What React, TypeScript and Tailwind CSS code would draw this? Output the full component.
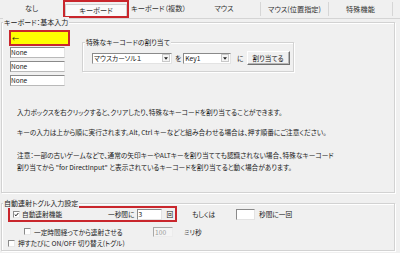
import React from "react";

function Check({ checked }: { checked?: boolean }) {
  return (
    <div className="relative w-[7px] h-[7px] bg-white border border-t-[#8a8a8a] border-l-[#8a8a8a] border-r-[#e8e8e8] border-b-[#e8e8e8] shrink-0">
      {checked && (
        <svg viewBox="0 0 7 7" className="absolute left-0 top-0 w-[5px] h-[5px]">
          <path d="M1 3.5 L2.8 5.3 L6 1.5" fill="none" stroke="#111" strokeWidth="1.4" />
        </svg>
      )}
    </div>
  );
}

function Arrow() {
  return (
    <div className="flex items-center justify-center w-[8px] h-[8px] bg-[#f4f4f4] border border-[#c8c8c8] shrink-0">
      <svg viewBox="0 0 6 4" className="w-[4px] h-[3px]">
        <path d="M0 0 L6 0 L3 4 Z" fill="#222" />
      </svg>
    </div>
  );
}

export default function App() {
  return (
    <div className="w-[400px] h-[253px] overflow-hidden bg-[#f0f0f0] text-[#1a1a1a] font-['Noto_Sans_CJK_JP','Noto_Sans',sans-serif] [font-feature-settings:'palt'] text-[6.7px] leading-[10px]">
      {/* tab bar */}
      <div className="flex h-[19px] border-b border-[#d4d4d4] text-[7.2px] text-[#333]">
        <div className="w-[63px] flex items-center justify-center pb-[3px]">なし</div>
        <div className="w-[66px] h-[18px] border-2 border-[#c9262c] flex">
          <div className="mt-[2px] flex-1 bg-[#fafafa] border-t border-x border-[#cfcfcf] flex items-center justify-center pb-[1px]">
            キーボード
          </div>
        </div>
        <div className="w-[59px] flex items-center justify-center pb-[3px]">キーボード（複数）</div>
        <div className="w-[73px] flex items-center justify-center pb-[3px] border-r border-[#d6d6d6] my-[2px]">マウス</div>
        <div className="w-[68px] flex items-center justify-center pb-[1px] border-r border-[#d6d6d6] my-[2px]">マウス(位置指定)</div>
        <div className="w-[64px] flex items-center justify-center pb-[1px] border-r border-[#d6d6d6] my-[2px]">特殊機能</div>
      </div>

      {/* group 1 */}
      <div className="relative mt-[3px] ml-[1px] w-[394px] h-[171px] border border-[#d2d2d2] shadow-[inset_1px_1px_0_#ffffff,1px_1px_0_#ffffff] pt-[7px] pl-[7px]">
        <div className="absolute -top-[6px] left-[1px] bg-[#f0f0f0] px-[1px] text-[7px] leading-[10px]">キーボード：基本入力</div>
        <div className="flex items-start">
          <div className="w-[61px] flex flex-col">
            <div className="w-[61px] h-[16px] border-2 border-[#c9262c]">
              <div className="h-full bg-[#ffff00] flex items-center pl-[1px] text-[7px]">←</div>
            </div>
            <div className="ml-[1px] mt-[1px] flex flex-col gap-[3px]">
              <div className="w-[55px] h-[11px] bg-white border border-t-[#8a8a8a] border-l-[#8a8a8a] border-r-[#e3e3e3] border-b-[#b9b9b9] flex items-center text-[6.5px] leading-[9px]">None</div>
              <div className="w-[55px] h-[11px] bg-white border border-t-[#8a8a8a] border-l-[#8a8a8a] border-r-[#e3e3e3] border-b-[#b9b9b9] flex items-center text-[6.5px] leading-[9px]">None</div>
              <div className="w-[55px] h-[11px] bg-white border border-t-[#8a8a8a] border-l-[#8a8a8a] border-r-[#e3e3e3] border-b-[#b9b9b9] flex items-center text-[6.5px] leading-[9px]">None</div>
            </div>
          </div>
          <div className="relative ml-[12px] mt-[12px] w-[212px] h-[30px] border border-[#d2d2d2] shadow-[inset_1px_1px_0_#ffffff,1px_1px_0_#ffffff] pt-[8px] pl-[9px]">
            <div className="absolute -top-[6px] left-[2px] bg-[#f0f0f0] px-[1px] text-[6.8px]">特殊なキーコードの割り当て</div>
            <div className="flex items-center h-[14px]">
              <div className="w-[80px] h-[11px] bg-white border border-t-[#8a8a8a] border-l-[#8a8a8a] border-r-[#e3e3e3] border-b-[#e3e3e3] flex items-center justify-between pl-[1px] pr-[1px]">
                <span>マウスカーソル１</span>
                <Arrow />
              </div>
              <span className="ml-[3px]">を</span>
              <div className="ml-[2px] w-[48px] h-[11px] bg-white border border-t-[#8a8a8a] border-l-[#8a8a8a] border-r-[#e3e3e3] border-b-[#e3e3e3] flex items-center justify-between pl-[1px] pr-[1px]">
                <span>Key1</span>
                <Arrow />
              </div>
              <span className="ml-[6px]">に</span>
              <div className="ml-[3px] w-[43px] h-[14px] bg-[#f0f0f0] border border-t-[#ffffff] border-l-[#ffffff] border-r-[#6f6f6f] border-b-[#6f6f6f] shadow-[inset_-1px_-1px_0_#b5b5b5] flex items-center justify-center">
                割り当てる
              </div>
            </div>
          </div>
        </div>
        <div className="ml-[8px] mt-[21px]">入力ボックスを右クリックすると、クリアしたり、特殊なキーコードを割り当てることができます。</div>
        <div className="ml-[8px] mt-[10px]">キーの入力は上から順に実行されます。Alt, Ctrl キーなどと組み合わせる場合は、押す順番にご注意ください。</div>
        <div className="ml-[8px] mt-[12px] leading-[12px]">
          <div>注意：一部の古いゲームなどで、通常の矢印キーやALTキーを割り当てても認識されない場合、特殊なキーコード</div>
          <div>割り当てから "for DirectInput" と表示されているキーコードを割り当てると動く場合があります。</div>
        </div>
      </div>

      {/* group 2 */}
      <div className="relative mt-[10px] ml-[1px] w-[394px] h-[48px] border border-[#d2d2d2] shadow-[inset_1px_1px_0_#ffffff,1px_1px_0_#ffffff] pt-[2px] pl-[6px]">
        <div className="absolute -top-[6px] left-[1px] bg-[#f0f0f0] px-[1px] text-[7px]">自動連射トグル入力設定</div>
        <div className="flex items-center">
          <div className="w-[169px] h-[16px] border-2 border-[#c9262c] flex items-center pl-[3px]">
            <Check checked />
            <span className="ml-[2px] w-[86px]">自動連射機能</span>
            <span>一秒間に</span>
            <div className="ml-[2px] w-[25px] h-[11px] bg-white border border-t-[#8a8a8a] border-l-[#8a8a8a] border-r-[#e3e3e3] border-b-[#e3e3e3] flex items-center pl-[1px]">3</div>
            <span className="ml-[5px]">回</span>
          </div>
          <span className="ml-[15px] w-[44px]">もしくは</span>
          <div className="w-[19px] h-[11px] bg-white border border-t-[#8a8a8a] border-l-[#8a8a8a] border-r-[#e3e3e3] border-b-[#e3e3e3]"></div>
          <span className="ml-[4px]">秒間に一回</span>
        </div>
        <div className="flex items-center mt-[4px] h-[11px] pl-[16px]">
          <Check />
          <span className="ml-[3px] w-[119px]">一定時間経ってから連射させる</span>
          <div className="w-[20px] h-[10px] bg-[#f4f4f4] border border-t-[#a8a8a8] border-l-[#a8a8a8] border-r-[#ececec] border-b-[#ececec] flex items-center pl-[1px] text-[#9a9a9a]">100</div>
          <span className="ml-[11px]">ミリ秒</span>
        </div>
        <div className="flex items-center mt-[1px] h-[10px] pl-[0px]">
          <Check />
          <span className="ml-[3px]">押すたびに ON/OFF 切り替え(トグル)</span>
        </div>
      </div>
    </div>
  );
}
